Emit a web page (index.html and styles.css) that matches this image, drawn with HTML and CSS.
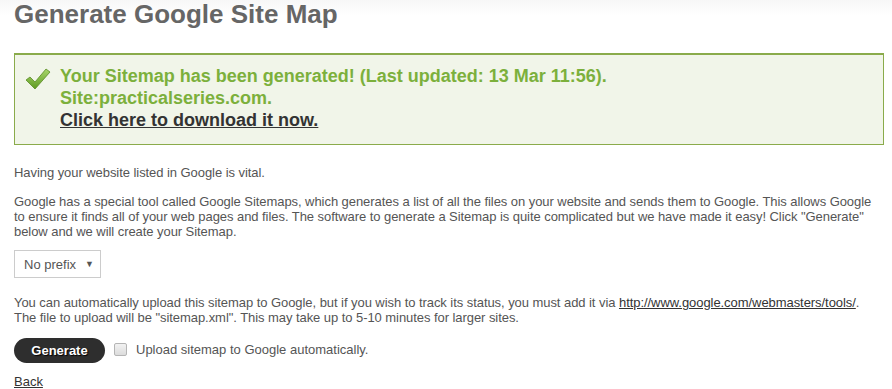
FILE: index.html
```html
<!DOCTYPE html>
<html>
<head>
<meta charset="utf-8">
<link rel="stylesheet" href="styles.css">
</head>
<body>
<div class="page">
  <h1 class="title">Generate Google Site Map</h1>
  <div class="success">
    <svg class="check" width="26" height="24" viewBox="0 0 26 24">
      <defs>
        <linearGradient id="g" x1="0" y1="0" x2="0" y2="1">
          <stop offset="0" stop-color="#a8d66a"/>
          <stop offset="1" stop-color="#5e9a22"/>
        </linearGradient>
      </defs>
      <path d="M1 13 L5 10 L10 15 L21 2 L25 5 L10 22 Z" fill="url(#g)" stroke="#5a8c25" stroke-width="0.8" stroke-linejoin="round"/>
    </svg>
    <div class="success-text">
      <div>Your Sitemap has been generated! (Last updated: 13 Mar 11:56).</div>
      <div>Site:practicalseries.com.</div>
      <a class="download" href="#">Click here to download it now.</a>
    </div>
  </div>
  <p class="para">Having your website listed in Google is vital.</p>
  <p class="para">Google has a special tool called Google Sitemaps, which generates a list of all the files on your website and sends them to Google. This allows Google to ensure it finds all of your web pages and files. The software to generate a Sitemap is quite complicated but we have made it easy! Click "Generate" below and we will create your Sitemap.</p>
  <div class="select">
    <span>No prefix</span>
    <span class="arrow">▼</span>
  </div>
  <p class="para">You can automatically upload this sitemap to Google, but if you wish to track its status, you must add it via <a class="link" href="#">http://www.google.com/webmasters/tools/</a>.<br>The file to upload will be "sitemap.xml". This may take up to 5-10 minutes for larger sites.</p>
  <div class="actions">
    <button class="btn">Generate</button>
    <label class="cb"><span class="box"></span>Upload sitemap to Google automatically.</label>
  </div>
  <a class="back" href="#">Back</a>
</div>
</body>
</html>
```
FILE: styles.css
```css
html, body {
  margin: 0;
  padding: 0;
}
body {
  background: linear-gradient(#f7f7f7 0, #ffffff 16px) no-repeat;
  font-family: "Liberation Sans", Arial, sans-serif;
  color: #555;
  font-size: 13px;
}
.page {
  padding: 0 8px 0 14px;
}
.title {
  margin: 0;
  font-size: 26px;
  line-height: 30px;
  font-weight: bold;
  color: #666;
  margin-top: -1px;
}
.success {
  margin-top: 24px;
  border: 2px solid #8aab4b;
  border-width: 2px 1px 1px 1px;
  background: #f1f5e9;
  display: flex;
  align-items: flex-start;
  padding: 10px 10px 11px 10px;
  height: 68px;
}
.check {
  margin-top: 2px;
  margin-right: 9px;
  flex: none;
}
.success-text {
  color: #7cb03c;
  font-weight: bold;
  font-size: 18px;
  line-height: 22px;
}
.download {
  color: #333;
  text-decoration: underline;
}
.para {
  margin: 0 0 11px 0;
  line-height: 15px;
  font-size: 13px;
  letter-spacing: -0.06px;
  padding-right: 2px;
}
.success + .para {
  margin-top: 20px;
  margin-bottom: 14px;
}
.select {
  width: 85px;
  height: 26px;
  border: 1px solid #ccc;
  display: flex;
  align-items: center;
  justify-content: space-between;
  margin: 11px 0 17px 0;
  color: #555;
  font-size: 13px;
}
.select span:first-child {
  padding-left: 9px;
}
.arrow {
  font-size: 9px;
  padding-right: 6px;
  color: #555;
}
.link {
  color: #333;
  text-decoration: underline;
}
.actions {
  display: flex;
  align-items: center;
  margin-top: 13px;
}
.btn {
  background: #2e2e2e;
  color: #fff;
  border: none;
  border-radius: 13px;
  width: 91px;
  height: 25px;
  font-family: "Liberation Sans", Arial, sans-serif;
  font-weight: bold;
  font-size: 13px;
  text-shadow: 1px 1px 1px #000;
  padding: 0;
}
.cb {
  display: flex;
  align-items: center;
  margin-left: 9px;
  font-size: 13px;
  margin-top: -3px;
}
.box {
  width: 11px;
  height: 11px;
  border: 1px solid #b5b5b5;
  border-radius: 2px;
  background: linear-gradient(#f2f2f2, #dcdcdc);
  margin-right: 9px;
}
.back {
  display: inline-block;
  margin-top: 11px;
  line-height: 15px;
  color: #333;
  text-decoration: underline;
  font-size: 13px;
}
```
